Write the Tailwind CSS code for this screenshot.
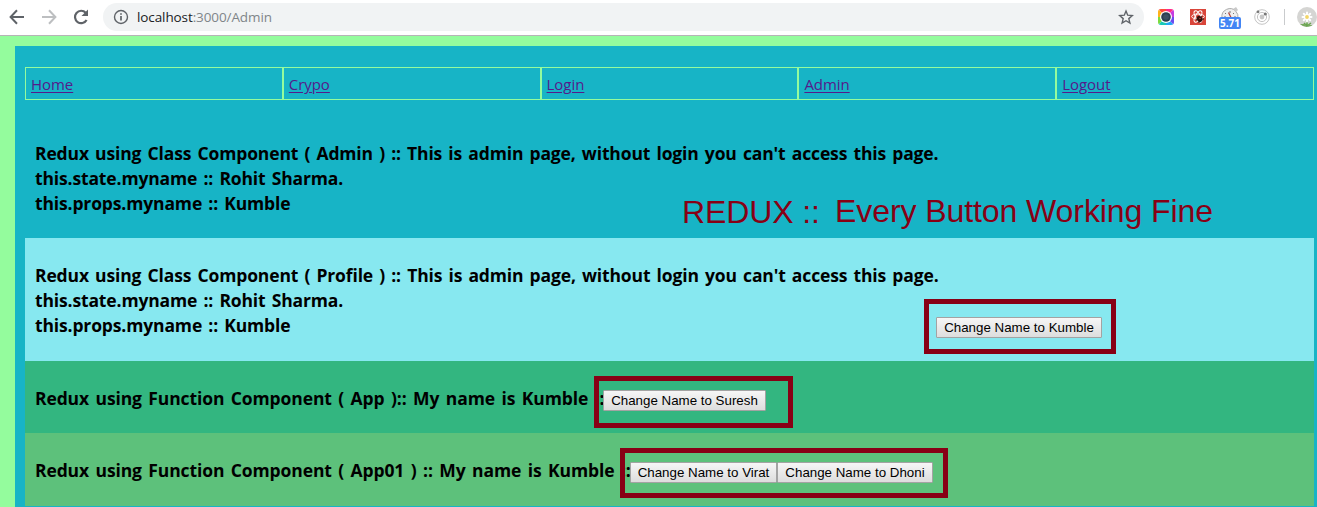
<!DOCTYPE html>
<html lang="en">
<head>
<meta charset="utf-8">
<title>localhost:3000/Admin</title>
<script src="https://cdn.jsdelivr.net/npm/@tailwindcss/browser@4"></script>
</head>
<body class="w-[1317px] h-[507px] overflow-hidden bg-[#94fc9d] font-['Open_Sans',sans-serif] text-black relative">
<header class="h-9 bg-white border-b border-[#b6b4b6] flex items-center pb-px">
  <svg class="ml-2 size-[18px] shrink-0" viewBox="0 0 18 18" fill="none" stroke="#5f6368" stroke-width="2"><path d="M16 9H3M9 2.3 2.6 9 9 15.7"/></svg>
  <svg class="ml-[14px] size-[18px] shrink-0" viewBox="0 0 18 18" fill="none" stroke="#bdbfc1" stroke-width="2"><path d="M2 9h13M9 2.3 15.400 9 9 15.700"/></svg>
  <svg class="ml-[14px] size-[18px] shrink-0" viewBox="0 0 18 18" fill="none" stroke="#5f6368" stroke-width="2.200"><path d="M14.600 12A6.200 6.200 0 1 1 13.700 4.700"/><path d="M16 1.500V8H9.500z" fill="#5f6368" stroke="none"/></svg>
  <div class="ml-[13px] w-[1041px] h-7 rounded-full bg-[#f1f3f4] flex items-center pl-[10px] pr-[10px] shrink-0">
    <svg class="size-4" viewBox="0 0 16 16" fill="none" stroke="#5f6368" stroke-width="1.400"><circle cx="8" cy="8" r="6.500"/><path d="M8 7v4.600M8 4.200v1.600" stroke-width="1.700"/></svg>
    <div class="ml-2 text-[13.500px] leading-5 tracking-[-0.1px] text-[#808589] whitespace-nowrap"><span class="text-[#202124]">localhost</span>:3000/Admin</div>
    <svg class="ml-auto size-4" viewBox="0 0 16 16" fill="none" stroke="#5f6368" stroke-width="1.400" stroke-linejoin="miter"><path d="m8 2 1.700 4.200 4.600.4-3.500 3 1.100 4.500L8 11.700l-3.900 2.400 1.100-4.500-3.500-3 4.600-.4z"/></svg>
  </div>
  <svg class="ml-[14px] size-4 shrink-0" viewBox="0 0 16 16"><defs><clipPath id="c"><rect width="16" height="16" rx="3"/></clipPath></defs><g clip-path="url(#c)"><path fill="#ff4b3a" d="M8 8 0 0h8z"/><path fill="#ffb31a" d="M8 8 0 0v8z"/><path fill="#7ddb3c" d="M8 8 0 8v8z"/><path fill="#19c8b8" d="M8 8 0 16h8z"/><path fill="#21a8f5" d="M8 8v8h8z"/><path fill="#6b4cf0" d="m8 8 8 8V8z"/><path fill="#c63be0" d="M8 8h8V0z"/><path fill="#ff2c8c" d="M8 8V0h8z"/></g><circle cx="8" cy="8" r="6" fill="#fff"/><circle cx="8" cy="8" r="4.800" fill="#2c3e50"/><circle cx="8" cy="8" r="2.800" fill="#3b4f62"/></svg>
  <svg class="ml-4 size-4 shrink-0" viewBox="0 0 16 16"><rect width="16" height="16" fill="#d9453a"/><g fill="none" stroke="#fff" stroke-width="1"><ellipse cx="8" cy="7.500" rx="6.300" ry="2.500"/><ellipse cx="8" cy="7.500" rx="6.300" ry="2.500" transform="rotate(60 8 7.500)"/><ellipse cx="8" cy="7.500" rx="6.300" ry="2.500" transform="rotate(120 8 7.500)"/></g><ellipse cx="9.500" cy="10" rx="2.600" ry="3.200" fill="#32130f" transform="rotate(-40 9.500 10)"/><path d="M6 11l2-1M9 14v-2M12 7l-1 2M14 10h-2" stroke="#32130f"/><circle cx="10" cy="9.500" r=".7" fill="#d9453a"/></svg>
  <div class="ml-[13px] w-[22px] h-6 mt-[4px] shrink-0 flex flex-col items-center">
    <svg class="w-[18px] h-[11px] shrink-0" viewBox="0 0 18 11"><path d="M1 11a8 8 0 0 1 14-6.500A8 8 0 0 1 17 11z" fill="#eee" stroke="#aaa"/><path d="M12 2 15 0l2 3-2 2z" fill="#c9c9c9"/><path d="M9 4v2M4 6l1 1M13 6l-1 1M3 10h2M13 10h2" stroke="#777"/><path d="m7.500 5.500 2.500 5" stroke="#b1433f" stroke-width="1.200"/></svg>
    <div class="w-[22px] h-3 mt-[-1px] rounded-[2px] bg-[#4285f4] text-white font-bold text-[10px] leading-3 text-center relative">5.71</div>
  </div>
  <svg class="ml-[13px] size-4 shrink-0" viewBox="0 0 16 16" fill="none" stroke="#c4c4c4"><circle cx="8" cy="8" r="7.300"/><circle cx="8" cy="8" r="4.600"/><circle cx="8" cy="8" r="2.400" fill="#c6c6c6" stroke="none"/><circle cx="4" cy="2.800" r="1.400" fill="#777" stroke="none"/><circle cx="11.300" cy="5" r="1.600" fill="#777" stroke="none"/></svg>
  <div class="ml-[14px] w-px h-4 bg-[#c9cbcd] shrink-0"></div>
  <svg class="ml-3 size-5 shrink-0" viewBox="0 0 20 20"><defs><clipPath id="d"><circle cx="10" cy="10" r="10"/></clipPath></defs><g clip-path="url(#d)"><path fill="#d5d5d3" d="M0 0h20v20H0z"/><path d="M10 11v9M10 19l-3-3M10 19l4-3" stroke="#69a64e" stroke-width="1.500"/><path d="M2 17h6l2 3H3zM11 18h6v2h-6z" fill="#78a95f"/><g stroke="#fff" stroke-width="2" stroke-linecap="round"><path d="M10 5.500v9M5.500 10h9M6.800 6.800l6.400 6.400M13.200 6.800l-6.400 6.400"/></g><circle cx="10" cy="10" r="1.900" fill="#f2d568"/></g></svg>
</header>

<main class="mt-[10px] ml-[15px] h-[461px] bg-[#17b4c6] pl-[10px] pr-[3px] pt-[21px]">
  <nav class="h-[33px] grid grid-cols-5 text-[15px] leading-[30px] tracking-[-0.05px] text-[#551a8b]">
    <div class="border border-[#94fc9d] pl-[5px] pt-px"><a class="underline underline-offset-2" href="#">Home</a></div>
    <div class="border border-[#94fc9d] pl-[5px] pt-px"><a class="underline underline-offset-2" href="#">Crypo</a></div>
    <div class="border border-[#94fc9d] pl-[5px] pt-px"><a class="underline underline-offset-2" href="#">Login</a></div>
    <div class="border border-[#94fc9d] pl-[5px] pt-px"><a class="underline underline-offset-2" href="#">Admin</a></div>
    <div class="border border-[#94fc9d] pl-[5px] pt-px"><a class="underline underline-offset-2" href="#">Logout</a></div>
  </nav>

  <section class="h-[138px] pt-[41px] pl-[10px] text-[17.500px] leading-[25px] font-bold tracking-[-0.14px] [word-spacing:1.8px] whitespace-nowrap">
    <p>Redux using Class Component ( Admin ) :: This is admin page, without login you can't access this page.</p>
    <p>this.state.myname :: Rohit Sharma.</p>
    <p>this.props.myname :: Kumble</p>
  </section>

  <section class="h-[123px] pt-[25px] pl-[10px] bg-[#87e8f0] text-[17.500px] leading-[25px] font-bold tracking-[-0.14px] [word-spacing:1.8px] whitespace-nowrap">
    <p>Redux using Class Component ( Profile ) :: This is admin page, without login you can't access this page.</p>
    <p>this.state.myname :: Rohit Sharma.</p>
    <div class="flex h-[25px] items-center"><p class="w-[901px]">this.props.myname :: Kumble</p>
      <button class="w-[166px] h-[21px] mt-[4px] rounded-[1px] border border-[#a3a3a3] bg-linear-to-b from-[#f6f6f6] to-[#dddddd] font-['Liberation_Sans',sans-serif] font-normal text-[13.333px] leading-[19px] tracking-normal [word-spacing:0px]">Change Name to Kumble</button></div>
  </section>

  <section class="h-[72px] pt-[25px] pl-[10px] bg-[#33b680] text-[17.500px] leading-[25px] font-bold tracking-[-0.12px] [word-spacing:2.1px] whitespace-nowrap">
    <div class="flex h-[25px] items-center"><p class="w-[568px]">Redux using Function Component ( App ):: My name is Kumble ::</p>
      <button class="w-[163px] h-[21px] mt-[4px] rounded-[1px] border border-[#a3a3a3] bg-linear-to-b from-[#f6f6f6] to-[#dddddd] font-['Liberation_Sans',sans-serif] font-normal text-[13.333px] leading-[19px] tracking-normal [word-spacing:0px]">Change Name to Suresh</button></div>
  </section>

  <section class="h-[73px] pt-[25px] pl-[10px] bg-[#5dc17b] text-[17.500px] leading-[25px] font-bold tracking-[-0.12px] [word-spacing:2.1px] whitespace-nowrap">
    <div class="flex h-[25px] items-center"><p class="w-[595px]">Redux using Function Component ( App01 ) :: My name is Kumble ::</p>
      <button class="w-[147px] h-[21px] mt-[4px] rounded-[1px] border border-[#a3a3a3] bg-linear-to-b from-[#f6f6f6] to-[#dddddd] font-['Liberation_Sans',sans-serif] font-normal text-[13.333px] leading-[19px] tracking-normal [word-spacing:0px]">Change Name to Virat</button>
      <button class="w-[156px] h-[21px] mt-[4px] rounded-[1px] border border-[#a3a3a3] bg-linear-to-b from-[#f6f6f6] to-[#dddddd] font-['Liberation_Sans',sans-serif] font-normal text-[13.333px] leading-[19px] tracking-normal [word-spacing:0px]">Change Name to Dhoni</button></div>
  </section>
</main>

<!-- Annotations over the page -->
<div class="absolute left-[682px] top-[194px] font-['Liberation_Sans',sans-serif] text-[32px] leading-9 tracking-[-0.1px] text-[#880015] whitespace-nowrap">REDUX ::</div>
<div class="absolute left-[835px] top-[193px] font-['Liberation_Sans',sans-serif] text-[32px] leading-9 tracking-[-0.08px] text-[#880015] whitespace-nowrap">Every Button Working Fine</div>
<div class="absolute left-[924px] top-[299px] w-[192px] h-[55px] border-5 border-[#880015]"></div>
<div class="absolute left-[594px] top-[376px] w-[199px] h-[52px] border-5 border-[#880015]"></div>
<div class="absolute left-[620px] top-[448px] w-[328px] h-[50px] border-5 border-[#880015]"></div>
</body>
</html>
